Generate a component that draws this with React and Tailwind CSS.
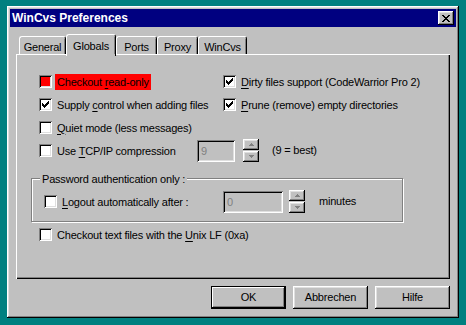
import React from 'react';

const raised =
  'shadow-[inset_-1px_-1px_#000,inset_1px_1px_#fff,inset_-2px_-2px_#808080,inset_2px_2px_#dfdfdf]';
const sunken =
  'shadow-[inset_1px_1px_#808080,inset_-1px_-1px_#fff,inset_2px_2px_#000,inset_-2px_-2px_#dfdfdf]';

function Check() {
  return (
    <svg width="13" height="13" viewBox="0 0 13 13" shapeRendering="crispEdges">
      <path
        fill="#000"
        d="M3 5h1v3H3z M4 6h1v3H4z M5 7h1v3H5z M6 6h1v3H6z M7 5h1v3H7z M8 4h1v3H8z M9 3h1v3H9z"
      />
    </svg>
  );
}

function Box({ checked, red }) {
  return (
    <div className={`w-[13px] h-[13px] shrink-0 ${red ? 'bg-[#ff0000]' : 'bg-white'} ${sunken}`}>
      {checked && <Check />}
    </div>
  );
}

// label with one underlined accelerator letter
function Label({ pre, u, post, red }) {
  return (
    <span className={`px-[2px] h-[16px] leading-[16px] whitespace-nowrap ${red ? 'bg-[#ff0000]' : ''}`}>
      {pre}
      <span className="underline underline-offset-[2px]">{u}</span>
      {post}
    </span>
  );
}

function CheckRow({ checked, red, children, className = '' }) {
  return (
    <div className={`flex items-center gap-[3px] ${className}`}>
      <Box checked={checked} red={red} />
      {children}
    </div>
  );
}

function Arrow({ up }) {
  return (
    <svg width="5" height="3" viewBox="0 0 5 3" shapeRendering="crispEdges">
      {up ? (
        <path fill="#808080" d="M2 0h1v1H2z M1 1h3v1H1z M0 2h5v1H0z" />
      ) : (
        <path fill="#808080" d="M0 0h5v1H0z M1 1h3v1H1z M2 2h1v1H2z" />
      )}
    </svg>
  );
}

function Spinner() {
  return (
    <div className="flex flex-col gap-[1px] w-[16px]">
      <div className={`h-[11px] flex items-center justify-center bg-[#c0c0c0] ${raised}`}>
        <Arrow up />
      </div>
      <div className={`h-[11px] flex items-center justify-center bg-[#c0c0c0] ${raised}`}>
        <Arrow />
      </div>
    </div>
  );
}

function Field({ value, w }) {
  return (
    <div className={`${w} h-[22px] bg-[#c0c0c0] text-[#808080] pl-[4px] leading-[22px] ${sunken}`}>
      {value}
    </div>
  );
}

function Tab({ label, w, active }) {
  if (active) {
    return (
      <div
        className={`${w} h-[22px] -mb-[2px] relative z-10 bg-[#c0c0c0] border-l border-t border-white border-r border-r-black rounded-t-[3px] flex justify-center pt-[3px]`}
      >
        <span className="border-r border-[#808080] absolute right-0 top-[2px] bottom-[2px]" />
        {label}
      </div>
    );
  }
  return (
    <div
      className={`${w} h-[18px] bg-[#c0c0c0] border-l border-t border-white border-r border-r-black rounded-t-[3px] flex justify-center pt-[2px] relative`}
    >
      <span className="border-r border-[#808080] absolute right-0 top-[2px] bottom-0" />
      {label}
    </div>
  );
}

function Button({ children, def }) {
  return (
    <div
      className={`w-[75px] h-[23px] flex items-center justify-center bg-[#c0c0c0] ${
        def ? 'border border-black shadow-[inset_-1px_-1px_#000,inset_1px_1px_#fff,inset_-2px_-2px_#808080]' : raised
      }`}
    >
      {children}
    </div>
  );
}

export default function App() {
  return (
    <div
      className="w-[466px] h-[325px] bg-[#008080] pt-[6px] pl-[7px] text-[11px] tracking-[-0.2px] text-black"
      style={{ fontFamily: '"Liberation Sans", Arial, sans-serif' }}
    >
      <div className={`w-[452px] h-[312px] bg-[#c0c0c0] p-[3px] ${raised}`}>
        {/* Title bar */}
        <div className="h-[18px] bg-[#000080] flex items-center justify-between pl-[2px] pr-[2px]">
          <span className="text-white font-bold text-[12px] tracking-normal">WinCvs Preferences</span>
          <div className={`w-[16px] h-[14px] bg-[#c0c0c0] flex items-center justify-center ${raised}`}>
            <svg width="8" height="7" viewBox="0 0 8 7" shapeRendering="crispEdges">
              <path
                fill="#000"
                d="M0 0h2v1H0z M6 0h2v1H6z M1 1h2v1H1z M5 1h2v1H5z M2 2h4v1H2z M3 3h2v1H3z M2 4h4v1H2z M1 5h2v1H1z M5 5h2v1H5z M0 6h2v1H0z M6 6h2v1H6z"
              />
            </svg>
          </div>
        </div>

        <div className="px-[6px]">
          {/* Tabs */}
          <div className="flex items-end h-[20px] mt-[7px] pl-[3px]">
            <Tab label="General" w="w-[47px]" />
            <Tab label="Globals" w="w-[50px]" active />
            <Tab label="Ports" w="w-[41px]" />
            <Tab label="Proxy" w="w-[41px]" />
            <Tab label="WinCvs" w="w-[49px]" />
          </div>

          {/* Panel */}
          <div className="h-[225px] pt-[16px] pl-[23px] shadow-[inset_1px_1px_#fff,inset_-1px_-1px_#000,inset_-2px_-2px_#808080]">
            <div className="grid grid-cols-[184px_1fr]">
              <CheckRow red className="h-[23px]">
                <Label pre="Checkout " u="r" post="ead-only" red />
              </CheckRow>
              <CheckRow checked className="h-[23px]">
                <Label u="D" post="irty files support (CodeWarrior Pro 2)" />
              </CheckRow>
              <CheckRow checked className="h-[23px]">
                <Label pre="Supply " u="c" post="ontrol when adding files" />
              </CheckRow>
              <CheckRow checked className="h-[23px]">
                <Label u="P" post="rune (remove) empty directories" />
              </CheckRow>
            </div>
            <CheckRow className="h-[23px]">
              <Label u="Q" post="uiet mode (less messages)" />
            </CheckRow>
            <div className="flex items-center h-[23px]">
              <CheckRow className="w-[158px]">
                <Label pre="Use " u="T" post="CP/IP compression" />
              </CheckRow>
              <Field value="9" w="w-[38px]" />
              <div className="ml-[8px]">
                <Spinner />
              </div>
              <span className="ml-[13px]">(9 = best)</span>
            </div>

            {/* Group box */}
            <div className="relative -ml-[8px] mt-[16px] w-[372px] h-[44px] border border-[#808080] shadow-[inset_1px_1px_#fff,1px_1px_#fff] pt-[11px] pl-[12px]">
              <span className="absolute -top-[8px] left-[8px] px-[2px] bg-[#c0c0c0] leading-[16px]">
                Password authentication only :
              </span>
              <div className="flex items-center h-[23px]">
                <CheckRow className="w-[179px]">
                  <Label u="L" post="ogout automatically after :" />
                </CheckRow>
                <Field value="0" w="w-[60px]" />
                <div className="ml-[6px]">
                  <Spinner />
                </div>
                <span className="ml-[14px]">minutes</span>
              </div>
            </div>

            <CheckRow className="h-[23px] mt-[1px]">
              <Label pre="Checkout text files with the " u="U" post="nix LF (0xa)" />
            </CheckRow>
          </div>

          {/* Buttons */}
          <div className="flex justify-end gap-[7px] mt-[7px]">
            <Button def>OK</Button>
            <Button>Abbrechen</Button>
            <Button>Hilfe</Button>
          </div>
        </div>
      </div>
    </div>
  );
}
